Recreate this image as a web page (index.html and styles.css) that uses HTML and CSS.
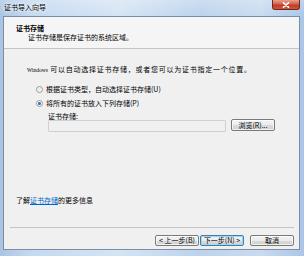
FILE: index.html
```html
<!DOCTYPE html>
<html lang="zh-CN">
<head>
<meta charset="utf-8">
<title>证书导入向导</title>
<link rel="stylesheet" href="styles.css">
</head>
<body>
<div class="window">
  <div class="titlebar">
    <span class="title">证书导入向导</span>
    <span class="close"><svg width="8" height="6" viewBox="0 0 8 6"><path d="M1.5 0.8 L6.5 5.2 M6.5 0.8 L1.5 5.2" stroke="#fff" stroke-width="1.6" stroke-linecap="round"/></svg></span>
  </div>
  <div class="client">
    <div class="header">
      <div class="h-title">证书存储</div>
      <div class="h-sub">证书存储是保存证书的系统区域。</div>
    </div>
    <div class="rule"></div>
    <div class="main">
      <div class="intro"><span class="latin">Windows</span> 可以自动选择证书存储，或者您可以为证书指定一个位置。</div>
      <div class="options">
        <div class="opt"><span class="radio"></span><span>根据证书类型，自动选择证书存储(U)</span></div>
        <div class="opt second"><span class="radio on"></span><span>将所有的证书放入下列存储(P)</span></div>
        <div class="store">
          <div class="store-label">证书存储:</div>
          <div class="store-row">
            <div class="field"></div>
            <div class="btn browse">浏览(R)...</div>
          </div>
        </div>
      </div>
      <div class="more">了解<span class="link">证书存储</span>的更多信息</div>
    </div>
    <div class="footer">
      <div class="rule2"></div>
      <div class="buttons">
        <div class="btn nav">&lt; 上一步(B)</div>
        <div class="btn nav next">下一步(N) &gt;</div>
        <div class="btn cancel">取消</div>
      </div>
    </div>
  </div>
</div>
</body>
</html>
```
FILE: styles.css
```css
html, body {
  margin: 0;
  padding: 0;
}
body {
  width: 304px;
  height: 256px;
  overflow: hidden;
  font-family: "Noto Sans CJK SC", "Noto Sans", sans-serif;
  font-size: 7px;
  color: #000;
}
.window {
  width: 304px;
  height: 256px;
  display: flex;
  flex-direction: column;
  background: linear-gradient(90deg, #a9c4e4 0px, #c4d9f0 30px, #d5e4f4 120px, #bcd3ec 200px, #c9dbef 260px, #a9c6e8 304px);
}
.titlebar {
  height: 16px;
  position: relative;
  display: flex;
  align-items: center;
  padding-left: 4px;
  background: linear-gradient(180deg, rgba(255,255,255,0.25), rgba(255,255,255,0));
}
.title {
  line-height: 9px;
  margin-top: -1px;
  text-shadow: 0 0 4px #fff, 0 0 3px #fff;
}
.close {
  position: absolute;
  right: 4px;
  top: 0;
  width: 28px;
  height: 10px;
  box-sizing: border-box;
  border: 1px solid #6e2a20;
  border-top: none;
  border-radius: 0 0 3px 3px;
  background: linear-gradient(180deg, #e8a08c 0%, #d6624a 45%, #c23a20 55%, #d0553a 100%);
  display: flex;
  align-items: center;
  justify-content: center;
}
.client {
  margin-left: 3px;
  width: 297px;
  height: 234px;
  box-sizing: border-box;
  border: 1px solid #7c8da3;
  background: #f0f0f0;
  display: flex;
  flex-direction: column;
}
.header {
  height: 31px;
  box-sizing: border-box;
  padding: 7px 0 0 12px;
  background: #f5f5f5;
  line-height: 9px;
}
.h-title {
  font-weight: bold;
}
.h-sub {
  margin-left: 12px;
}
.rule {
  height: 1px;
  background: #c4c4c4;
}
.main {
  flex: 1;
  display: flex;
  flex-direction: column;
  padding-left: 23px;
}
.intro {
  margin-top: 16px;
  line-height: 9px;
  letter-spacing: 0.75px;
}
.latin {
  font-family: "Liberation Serif", serif;
  font-size: 5.5px;
  letter-spacing: 0;
}
.options {
  margin-top: 10px;
  margin-left: 9px;
}
.opt {
  display: flex;
  align-items: center;
  height: 9px;
  line-height: 9px;
  gap: 3px;
}
.opt.second {
  margin-top: 5px;
}
.radio {
  width: 7px;
  height: 7px;
  box-sizing: border-box;
  border-radius: 50%;
  border: 1px solid #9a9a9a;
  background: radial-gradient(circle at 50% 50%, #e6e6e6, #ffffff);
  position: relative;
}
.radio.on::after {
  content: "";
  position: absolute;
  left: 1px;
  top: 1px;
  width: 3px;
  height: 3px;
  border-radius: 50%;
  background: #2a6fb8;
}
.store {
  margin-left: 12px;
  margin-top: 4px;
}
.store-label {
  line-height: 8px;
  height: 8px;
}
.store-row {
  display: flex;
  align-items: flex-start;
  gap: 5px;
}
.field {
  width: 178px;
  height: 12px;
  box-sizing: border-box;
  border: 1px solid #d0d0d0;
  border-radius: 1px;
  background: #f0f0f0;
}
.btn {
  box-sizing: border-box;
  border: 1px solid #7a7a7a;
  border-radius: 2px;
  background: linear-gradient(180deg, #f4f4f4 0%, #ebebeb 50%, #dcdcdc 51%, #cfcfcf 100%);
  display: flex;
  align-items: center;
  justify-content: center;
  line-height: 9px;
  box-shadow: inset 0 0 0 1px rgba(255,255,255,0.7);
}
.browse {
  width: 44px;
  height: 12px;
  margin-top: -1px;
}
.more {
  margin-top: auto;
  margin-bottom: 23px;
  margin-left: -11px;
  line-height: 8px;
}
.link {
  color: #0066cc;
  text-decoration: underline;
}
.footer {
  height: 22px;
  display: flex;
  flex-direction: column;
}
.rule2 {
  height: 1px;
  margin: 0 5px 0 6px;
  background: #c4c4c4;
}
.buttons {
  display: flex;
  justify-content: flex-end;
  padding: 7px 5px 0 0;
}
.nav {
  width: 44px;
  height: 11px;
}
.next {
  margin-left: 1px;
  border-color: #3c7fb1;
  box-shadow: inset 0 0 0 1px #9fd6f5;
}
.cancel {
  width: 44px;
  height: 11px;
  margin-left: 6px;
}
```
